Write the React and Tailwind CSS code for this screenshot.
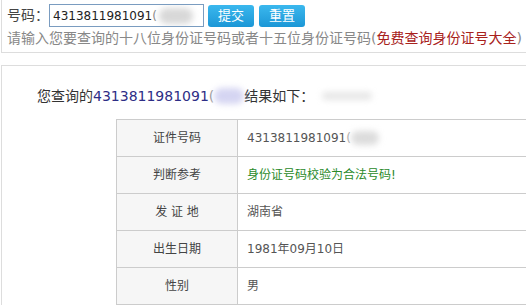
import React from "react";

const rows = [
    { label: "证件号码", value: "4313811981091", blur: true },
    { label: "判断参考", value: "身份证号码校验为合法号码!", green: true },
    { label: "发 证 地", value: "湖南省" },
    { label: "出生日期", value: "1981年09月10日" },
    { label: "性别", value: "男" },
];

const Blob = ({ className }) => (
    <span className={"inline-block align-middle rounded-full blur-[3px] " + className} />
);

export default function App() {
    return (
        <div
            className="w-[526px] h-[306px] overflow-hidden bg-white text-[#444]"
            style={{ fontFamily: '"DejaVu Sans", "Noto Sans CJK SC", sans-serif' }}
        >
            {/* search panel */}
            <div className="ml-[1px] h-[53px] border-l border-b border-[#ddd] pl-[5px] pt-[4px]">
                <div className="flex items-center h-[23px] text-[14px]">
                    <span className="text-[#444]">号码：</span>
                    <div className="w-[155px] h-[23px] border border-[#7a9cc0] bg-white flex items-center px-[3px] text-[12px] text-[#222] overflow-hidden">
                        <span>4313811981091</span>
                        <span className="text-[#888]">(</span>
                        <Blob className="ml-[2px] w-[34px] h-[16px] bg-[#d8d8d8]" />
                    </div>
                    <button className="ml-[4px] w-[46px] h-[22px] rounded-[3px] bg-gradient-to-b from-[#3ab8ee] to-[#1b97d6] text-white text-[13px] leading-none">
                        提交
                    </button>
                    <button className="ml-[5px] w-[46px] h-[22px] rounded-[3px] bg-gradient-to-b from-[#3ab8ee] to-[#1b97d6] text-white text-[13px] leading-none">
                        重置
                    </button>
                </div>
                <div className="mt-[1px] text-[14px] leading-[20px] whitespace-nowrap text-[#888]">
                    请输入您要查询的十八位身份证号码或者十五位身份证号码(<span className="text-[#a8221c]">免费查询身份证号大全</span>)
                </div>
            </div>

            {/* result panel */}
            <div className="mt-[12px] ml-[1px] border-l border-t border-[#ddd] pt-[20px]">
                <div className="pl-[35px] h-[20px] flex items-center text-[14px] text-[#333] whitespace-nowrap">
                    <span>您查询的</span>
                    <span className="text-[#2e2e86]">4313811981091</span>
                    <span className="text-[#999]">(</span>
                    <Blob className="w-[30px] h-[16px] bg-[#d5d5f2]" />
                    <span>结果如下：</span>
                    <Blob className="ml-[8px] w-[50px] h-[8px] bg-[#e6e6e6]" />
                </div>

                <div className="mt-[13px] ml-[114px] w-[420px] border-t border-l border-[#ccc] text-[12px]">
                    {rows.map((r) => (
                        <div key={r.label} className="flex h-[37px] border-b border-[#ccc]">
                            <div className="w-[121px] shrink-0 bg-[#f6f6f6] border-r border-[#ccc] flex items-center justify-center text-[#444] whitespace-pre">
                                {r.label}
                            </div>
                            <div
                                className={
                                    "flex-1 flex items-center pl-[9px] whitespace-nowrap " +
                                    (r.green ? "text-[#2a8a2a]" : "text-[#555]")
                                }
                            >
                                {r.value}
                                {r.blur && (
                                    <>
                                        <span className="text-[#aaa]">(</span>
                                        <Blob className="w-[28px] h-[14px] bg-[#dcdcdc]" />
                                    </>
                                )}
                            </div>
                        </div>
                    ))}
                </div>
            </div>
        </div>
    );
}
